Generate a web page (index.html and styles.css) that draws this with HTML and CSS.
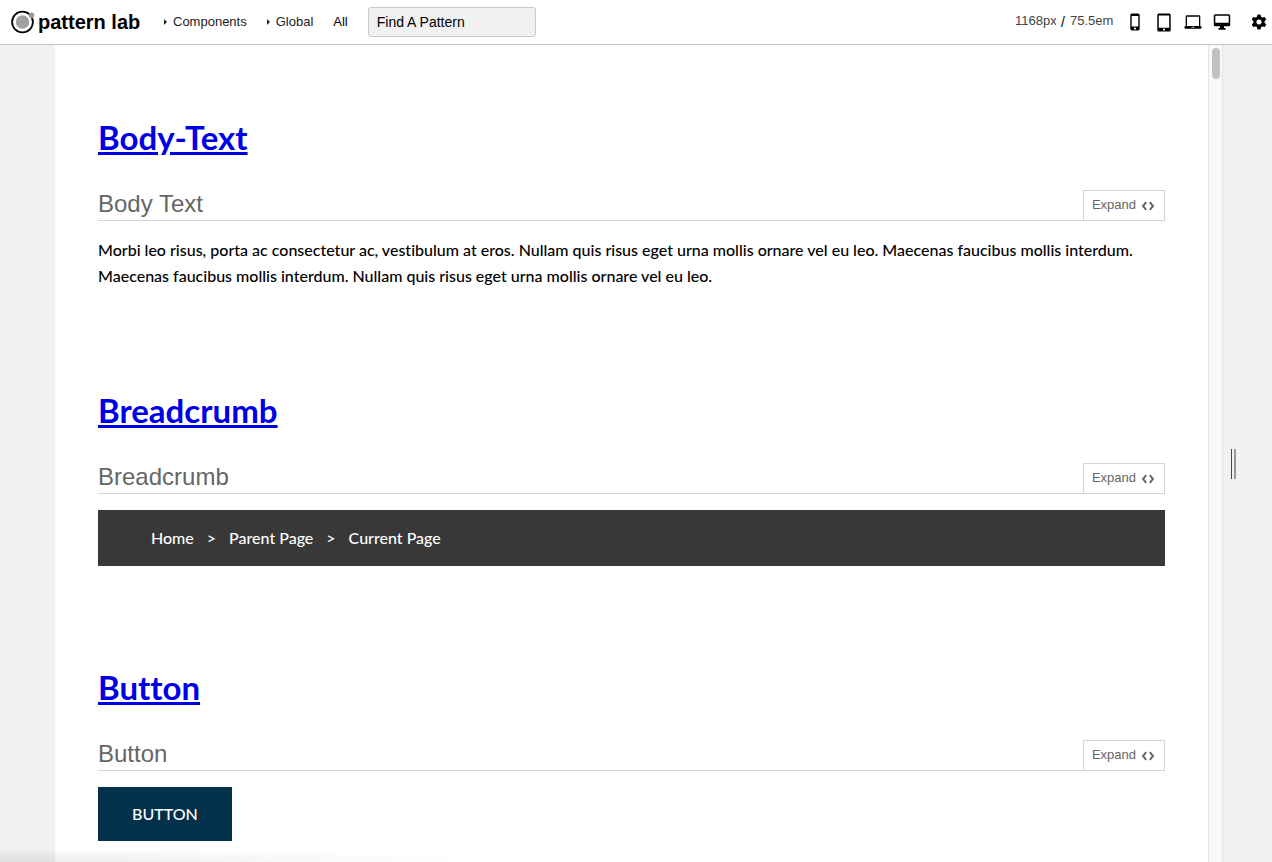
FILE: index.html
```html
<!DOCTYPE html>
<html lang="en">
<head>
<meta charset="utf-8">
<meta name="viewport" content="width=device-width, initial-scale=1">
<title>Pattern Lab</title>
<link rel="stylesheet" href="styles.css">
</head>
<body>
<svg class="sprite" aria-hidden="true">
  <symbol id="code" viewBox="0 0 14 10"><path d="M5.200 1.200 2 5l3.200 3.800M8.800 1.200 12 5 8.800 8.800" fill="none" stroke="currentColor" stroke-width="2"/></symbol>
</svg>
<header class="header">
  <a class="logo" href="#">
    <svg class="logo-mark" viewBox="0 0 24 24" aria-hidden="true"><circle cx="11.500" cy="12" r="10.400" fill="#fff" stroke="#000" stroke-width="1.800"/><circle cx="11.500" cy="12" r="6.700" fill="#a0a0a0"/><circle cx="20.500" cy="5.200" r="2.800" fill="#999"/></svg>
    <span class="logo-text">pattern lab</span>
  </a>
  <nav class="nav">
    <button class="nav-item" type="button"><span class="caret"></span>Components</button>
    <button class="nav-item" type="button"><span class="caret"></span>Global</button>
    <a class="nav-item nav-all" href="#">All</a>
  </nav>
  <input class="search" type="text" placeholder="Find A Pattern" aria-label="Find a pattern">
  <div class="controls">
    <form class="size">
      <input class="size-input size-px" type="text" value="1168px" aria-label="Width in pixels">
      <span class="slash">/</span>
      <input class="size-input size-em" type="text" value="75.5em" aria-label="Width in ems">
    </form>
    <div class="devices">
      <button class="device" type="button" aria-label="Phone"><svg width="10" height="18" viewBox="0 0 10 18"><path fill-rule="evenodd" d="M2 .5h6A1.700 1.700 0 0 1 9.700 2.200v13.600A1.700 1.700 0 0 1 8 17.500H2A1.700 1.700 0 0 1 .3 15.800V2.200A1.700 1.700 0 0 1 2 .5ZM1.700 3v10.500h6.600V3ZM5 14.400a1.100 1.100 0 1 0 .01 0Z"/></svg></button>
      <button class="device" type="button" aria-label="Tablet"><svg width="14" height="19" viewBox="0 0 14 19"><path fill-rule="evenodd" d="M1.800.5h10.400a1.500 1.500 0 0 1 1.500 1.500v15a1.500 1.500 0 0 1-1.500 1.500H1.800A1.500 1.500 0 0 1 .3 17V2A1.500 1.500 0 0 1 1.800.5ZM1.800 2.500v12.300h10.400V2.500ZM7 15.600a1 1 0 1 0 .01 0Z"/></svg></button>
      <button class="device" type="button" aria-label="Laptop"><svg width="18" height="14" viewBox="0 0 18 14"><path fill-rule="evenodd" d="M3 .3h12a1.300 1.300 0 0 1 1.300 1.300v9.600h1.200V13l-.7.700H1.200L.5 13v-1.800h1.200V1.600A1.300 1.300 0 0 1 3 .3ZM3 1.800v9.200h12V1.800ZM7.500 11.800v.7h3v-.7Z"/></svg></button>
      <button class="device" type="button" aria-label="Desktop"><svg width="18" height="16" viewBox="0 0 18 16"><path fill-rule="evenodd" d="M2.300.3h13.400A1.500 1.500 0 0 1 17.200 1.800v8.900a1.500 1.500 0 0 1-1.500 1.500h-4.700v1.900h1.500v1.600h-7v-1.600H7v-1.900H2.300A1.500 1.500 0 0 1 .8 10.700V1.800A1.500 1.500 0 0 1 2.300.3ZM2.300 1.800v7h13.400v-7Z"/></svg></button>
    </div>
    <button class="settings" type="button" aria-label="Settings"><svg width="16" height="16" viewBox="0 0 16 16"><g transform="translate(8 8)"><path fill-rule="evenodd" d="M0-5.500a5.500 5.500 0 1 0 .01 0ZM0-2.600a2.600 2.600 0 1 1-.01 0Z"/><path id="tooth" d="M-1.500-7.500h3l.8 3h-4.600Z"/><use href="#tooth" transform="rotate(60)"/><use href="#tooth" transform="rotate(120)"/><use href="#tooth" transform="rotate(180)"/><use href="#tooth" transform="rotate(240)"/><use href="#tooth" transform="rotate(300)"/></g></svg></button>
  </div>
</header>
<div class="stage">
  <main class="viewport">
    <section class="pattern">
      <h2 class="category"><a href="#">Body-Text</a></h2>
      <div class="pattern-head"><h3 class="pattern-title">Body Text</h3><button class="expand" type="button">Expand <svg class="code"><use href="#code"/></svg></button></div>
      <p class="copy">Morbi leo risus, porta ac consectetur ac, vestibulum at eros. Nullam quis risus eget urna mollis ornare vel eu leo. Maecenas faucibus mollis interdum. Maecenas faucibus mollis interdum. Nullam quis risus eget urna mollis ornare vel eu leo.</p>
    </section>
    <section class="pattern">
      <h2 class="category"><a href="#">Breadcrumb</a></h2>
      <div class="pattern-head"><h3 class="pattern-title">Breadcrumb</h3><button class="expand" type="button">Expand <svg class="code"><use href="#code"/></svg></button></div>
      <nav class="breadcrumb" aria-label="Breadcrumb"><a href="#">Home</a><span>&gt;</span><a href="#">Parent Page</a><span>&gt;</span><a href="#">Current Page</a></nav>
    </section>
    <section class="pattern">
      <h2 class="category"><a href="#">Button</a></h2>
      <div class="pattern-head"><h3 class="pattern-title">Button</h3><button class="expand" type="button">Expand <svg class="code"><use href="#code"/></svg></button></div>
      <button class="button" type="button">BUTTON</button>
    </section>
  </main>
  <div class="scrollbar"><div class="thumb"></div></div>
  <div class="resize"><div class="grip"></div></div>
</div>
<div class="status-shadow"></div>
</body>
</html>
```
FILE: styles.css
```css
* { box-sizing: border-box; }
body {
  margin: 0;
  height: 100vh;
  display: flex;
  flex-direction: column;
  overflow: hidden;
  background: #f1f1f1;
  color: #000;
  font-family: "Liberation Sans", Arial, sans-serif;
}
button, input { font: inherit; color: inherit; }
button { margin: 0; padding: 0; border: 0; background: none; cursor: pointer; }
a { color: inherit; text-decoration: none; }
svg { display: block; fill: currentColor; }
.sprite { position: absolute; width: 0; height: 0; }

.header {
  flex: none;
  display: flex;
  align-items: center;
  height: 45px;
  padding: 0 5px 0 11px;
  border-bottom: 1px solid #c2c2c2;
  background: #fff;
  font-size: 13px;
}
.logo { display: flex; align-items: center; gap: 3px; width: 153px; }
.logo-mark { width: 24px; height: 24px; }
.logo-text { font-size: 20px; font-weight: bold; line-height: 24px; white-space: nowrap; }
.nav { display: flex; gap: 20px; color: #222; }
.nav-item { display: flex; align-items: center; gap: 6px; line-height: 20px; }
.nav-all { color: #000; }
.caret { border: 3px solid transparent; border-left-color: #222; border-right: 0; }
.search {
  width: 168px;
  height: 30px;
  margin-left: 20px;
  padding: 0 8px;
  border: 1px solid #c8c8c8;
  border-radius: 3px;
  background: #f1f1f1;
  font-size: 14px;
}
.search::placeholder { color: #000; opacity: 1; }
.controls { display: flex; align-items: center; margin-left: auto; }
.size { display: flex; align-items: center; gap: 5px; line-height: 20px; }
.size-input { height: 20px; padding: 0 0 2px; border: 0; background: none; color: #444; }
.size-px { width: 41px; }
.size-em { width: 44px; }
.slash { font-size: 14px; }
.devices { display: flex; align-items: center; gap: 11px; margin-left: 12px; }
.device { display: flex; justify-content: center; width: 18px; }
.settings { margin-left: 20px; }

.stage { flex: 1; min-height: 0; display: flex; padding-left: 55px; }
.viewport { flex: 1; min-width: 0; overflow: hidden; padding: 72px 43px 0; background: #fff; }
.scrollbar { width: 15px; padding: 3px; border: solid #e4e4e4; border-width: 0 1px; background: #f9f9f9; }
.thumb { width: 8px; height: 31px; border-radius: 4px; background: #c1c1c1; }
.resize { width: 49px; padding-left: 8px; display: flex; align-items: center; }
.grip { width: 5px; height: 30px; margin-top: 20px; border-left: 1px solid #444; border-right: 2px solid #999; }

.pattern { margin-bottom: 101px; font: 500 16px/26px Lato, sans-serif; font-variant-ligatures: none; }
.category { margin: 0 0 33px; font-size: 33px; font-weight: 700; line-height: 40px; color: #0000e6; }
.category a { text-decoration: underline; }
.pattern-head {
  display: flex;
  justify-content: space-between;
  height: 31px;
  margin-bottom: 16px;
  border-bottom: 1px solid #d4d4d4;
  font-family: "Liberation Sans", Arial, sans-serif;
  font-weight: 400;
  color: #666;
}
.pattern-title { margin: 0; font-size: 24px; font-weight: 400; line-height: 28px; }
.expand {
  display: flex;
  align-items: center;
  gap: 5px;
  padding: 0 9px 2px 8px;
  border: 1px solid #d4d4d4;
  border-bottom: 0;
  font-size: 13px;
}
.code { width: 14px; height: 10px; margin-top: 2px; }
.copy { margin: 0; }
.breadcrumb { display: flex; gap: 13px; padding: 15px 53px; background: #383838; color: #fff; }
.button { display: block; padding: 14px 34px; background: #033149; color: #fff; }

.status-shadow {
  position: fixed;
  left: 0;
  bottom: 0;
  width: 480px;
  height: 14px;
  background: radial-gradient(ellipse 100% 100% at 0 100%, rgb(0 0 0 / 8%), transparent);
  pointer-events: none;
}
```
